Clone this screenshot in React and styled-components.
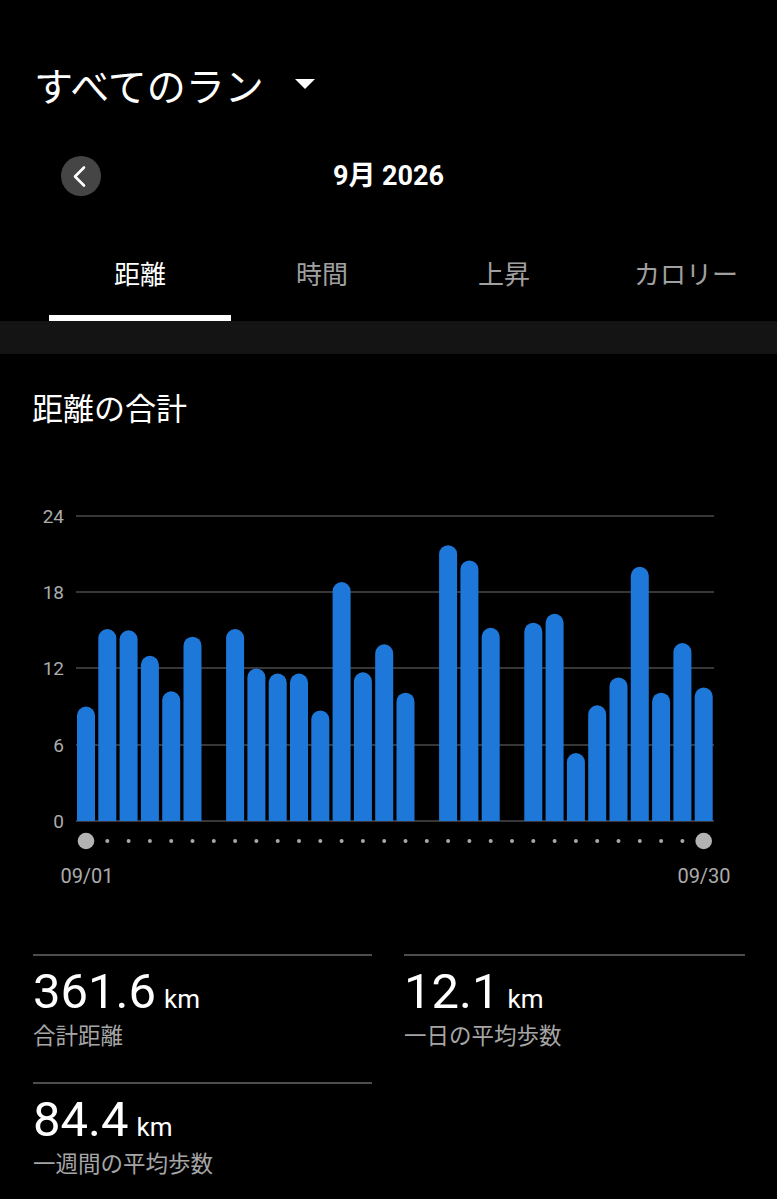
import React from "react";
import styled, { createGlobalStyle } from "styled-components";

const GlobalStyle = createGlobalStyle`
  html, body { margin: 0; padding: 0; background: #000; }
  body {
    font-family: Roboto, "Noto Sans CJK JP", sans-serif;
    color: #fff;
    -webkit-font-smoothing: antialiased;
  }
  * { box-sizing: border-box; }
`;

const Page = styled.div`
  background: #000;
  min-height: 1199px;
  overflow: hidden;
`;

const TitleRow = styled.div`
  display: flex;
  align-items: center;
  height: 130px;
  padding: 38px 0 0 34px;
`;

const Title = styled.h1`
  margin: 0;
  font-family: "Noto Sans CJK JP", sans-serif;
  font-weight: 400;
  font-size: 39px;
  line-height: 1;
  letter-spacing: 0;
`;

const Caret = styled.span`
  margin-left: 31px;
  width: 0;
  height: 0;
  border-left: 10px solid transparent;
  border-right: 10px solid transparent;
  border-top: 10px solid #fff;
`;

const MonthNav = styled.div`
  display: grid;
  grid-template-columns: 1fr auto 1fr;
  align-items: center;
  height: 92px;
`;

const BackButton = styled.button`
  margin-left: 61px;
  width: 40px;
  height: 40px;
  border-radius: 50%;
  border: none;
  padding: 0;
  background: #454545;
  display: flex;
  align-items: center;
  justify-content: center;
`;

const MonthLabel = styled.div`
  font-family: Roboto, "Noto Sans CJK JP", sans-serif;
  font-weight: 700;
  font-size: 27px;
  line-height: 1;
`;

const Tabs = styled.div`
  display: flex;
  padding-left: 49px;
`;

const Tab = styled.div`
  flex: 0 0 182px;
  height: 99px;
  padding-top: 9px;
  border-bottom: 6px solid ${(p) => (p.$active ? "#fff" : "transparent")};
  display: flex;
  align-items: center;
  justify-content: center;
  font-family: "Noto Sans CJK JP", sans-serif;
  font-size: 26px;
  line-height: 1;
  color: ${(p) => (p.$active ? "#fff" : "#a0a0a0")};
  white-space: nowrap;
`;

const Band = styled.div`
  height: 33px;
  background: #141414;
`;

const SectionTitle = styled.h2`
  margin: 37px 0 0 32px;
  font-family: "Noto Sans CJK JP", sans-serif;
  font-weight: 400;
  font-size: 31px;
  line-height: 31px;
`;

const ChartSvg = styled.svg`
  display: block;
  margin-top: 78px;
`;

const StatsGrid = styled.div`
  display: grid;
  grid-template-columns: 339px 341px;
  column-gap: 32px;
  padding-left: 33px;
  margin-top: 64px;
`;

const StatCell = styled.div`
  height: 128px;
  border-top: 2px solid #4d4d4d;
  padding-top: 11px;
`;

const Value = styled.div`
  font-family: Roboto, sans-serif;
  font-weight: 400;
  font-size: 49px;
  line-height: 49px;
  white-space: nowrap;
`;

const Unit = styled.span`
  font-size: 26px;
  line-height: 1;
  margin-left: 8px;
`;

const StatLabel = styled.div`
  margin-top: 7px;
  font-family: "Noto Sans CJK JP", sans-serif;
  font-size: 22.5px;
  line-height: 22px;
  color: #a6a6a6;
  white-space: nowrap;
`;

const data = [
  9.0, 15.1, 15.0, 13.0, 10.2, 14.5, 0, 15.1, 12.0, 11.6, 11.6, 8.7, 18.8,
  11.7, 13.9, 10.1, 0, 21.7, 20.5, 15.2, 0, 15.6, 16.3, 5.35, 9.1, 11.3, 20.0,
  10.1, 14.0, 10.5,
];

const X0 = 77;
const SLOT = 21.3;
const BW = 18;
const BASE = 321;
const PX_PER = 12.71;
const grid = [
  { v: 24, y: 16 },
  { v: 18, y: 92 },
  { v: 12, y: 168 },
  { v: 6, y: 245 },
  { v: 0, y: 321 },
];

function barPath(x, v) {
  const top = BASE - v * PX_PER;
  const r = BW / 2;
  return `M${x},${BASE} V${top + r} A${r},${r} 0 0 1 ${x + BW},${top + r} V${BASE} Z`;
}

function Chart() {
  return (
    <ChartSvg width="777" height="390" viewBox="0 0 777 390">
      {grid.map((g) => (
        <g key={g.v}>
          <line x1="76" x2="714" y1={g.y} y2={g.y} stroke="#4a4a4a" strokeWidth="1.5" />
          <text
            x="64"
            y={g.y + 7}
            textAnchor="end"
            fontFamily="Roboto, sans-serif"
            fontSize="19"
            fill="#ababab"
          >
            {g.v}
          </text>
        </g>
      ))}
      {data.map((v, i) =>
        v > 0 ? <path key={i} d={barPath(X0 + i * SLOT, v)} fill="#1e78d9" /> : null
      )}
      {data.map((_, i) => {
        const cx = X0 + i * SLOT + BW / 2;
        const big = i === 0 || i === data.length - 1;
        return <circle key={i} cx={cx} cy="341" r={big ? 8.3 : 2} fill={big ? "#b3b3b3" : "#a8a8a8"} />;
      })}
      <text x="87" y="383" textAnchor="middle" fontFamily="Roboto, sans-serif" fontSize="20" fill="#ababab">
        09/01
      </text>
      <text x="704" y="383" textAnchor="middle" fontFamily="Roboto, sans-serif" fontSize="20" fill="#ababab">
        09/30
      </text>
    </ChartSvg>
  );
}

const stats = [
  { value: "361.6", label: "合計距離" },
  { value: "12.1", label: "一日の平均歩数" },
  { value: "84.4", label: "一週間の平均歩数" },
];

export default function App() {
  const tabs = ["距離", "時間", "上昇", "カロリー"];
  return (
    <Page>
      <GlobalStyle />
      <TitleRow>
        <Title>すべてのラン</Title>
        <Caret />
      </TitleRow>
      <MonthNav>
        <div>
          <BackButton aria-label="前の月">
            <svg width="40" height="40" viewBox="0 0 40 40">
              <polyline
                points="23,11.5 14,20.5 23,29.5"
                fill="none"
                stroke="#fff"
                strokeWidth="2.6"
                strokeLinecap="round"
                strokeLinejoin="round"
              />
            </svg>
          </BackButton>
        </div>
        <MonthLabel>9月 2026</MonthLabel>
        <div />
      </MonthNav>
      <Tabs>
        {tabs.map((t, i) => (
          <Tab key={t} $active={i === 0}>
            {t}
          </Tab>
        ))}
      </Tabs>
      <Band />
      <SectionTitle>距離の合計</SectionTitle>
      <Chart />
      <StatsGrid>
        {stats.map((s) => (
          <StatCell key={s.label}>
            <Value>
              {s.value}
              <Unit>km</Unit>
            </Value>
            <StatLabel>{s.label}</StatLabel>
          </StatCell>
        ))}
      </StatsGrid>
    </Page>
  );
}
